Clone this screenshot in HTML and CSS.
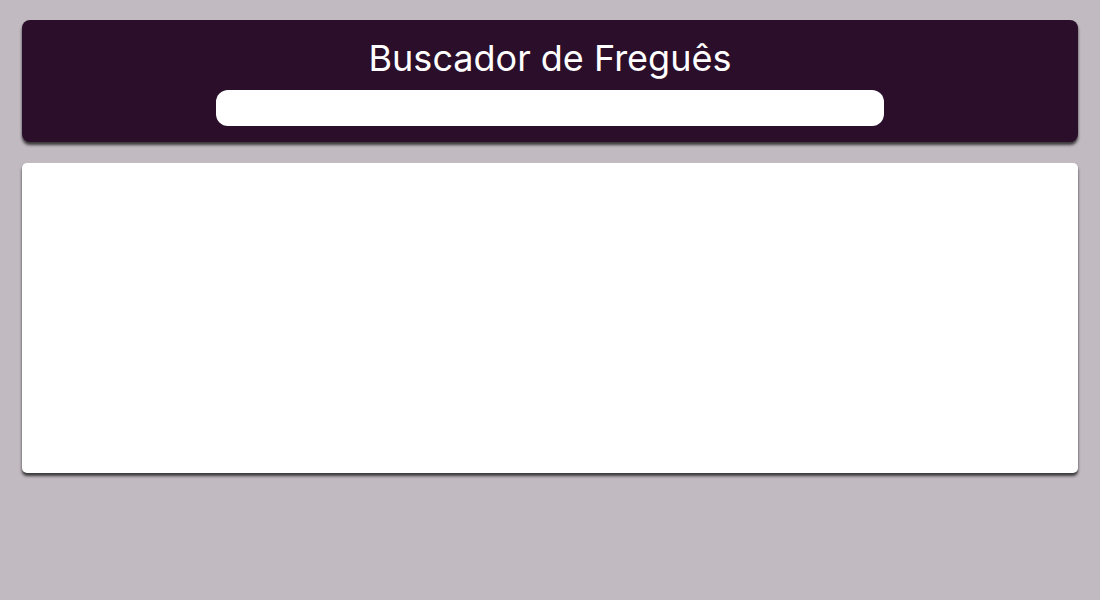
FILE: index.html
```html
<!DOCTYPE html>
<html lang="pt">
<head>
<meta charset="utf-8">
<title>Buscador de Freguês</title>
<link rel="stylesheet" href="styles.css">
</head>
<body>
<header class="header">
  <h1 class="title">Buscador de Freguês</h1>
  <input class="search" type="text" aria-label="Buscar">
</header>
<main class="results"></main>
</body>
</html>
```
FILE: styles.css
```css
html, body {
  margin: 0;
  padding: 0;
}
body {
  background: #c1bac1;
  font-family: Inter, "Noto Sans", sans-serif;
  padding: 20px 22px;
  min-height: 600px;
  box-sizing: border-box;
}
.header {
  background: #2a0e2a;
  border-radius: 8px;
  box-shadow: 0 3px 3px rgba(0, 0, 0, 0.7);
  display: flex;
  flex-direction: column;
  align-items: center;
  padding: 17px 0 16px;
}
.title {
  margin: 0 0 11px;
  color: #ffffff;
  font-weight: 400;
  font-size: 36px;
  line-height: 42px;
}
.search {
  width: 668px;
  height: 36px;
  box-sizing: border-box;
  border: none;
  border-radius: 12px;
  background: #ffffff;
  outline: none;
}
.results {
  display: block;
  margin-top: 21px;
  height: 310px;
  background: #ffffff;
  border-radius: 5px;
  box-shadow: 0 3px 3px rgba(0, 0, 0, 0.7);
}
```
